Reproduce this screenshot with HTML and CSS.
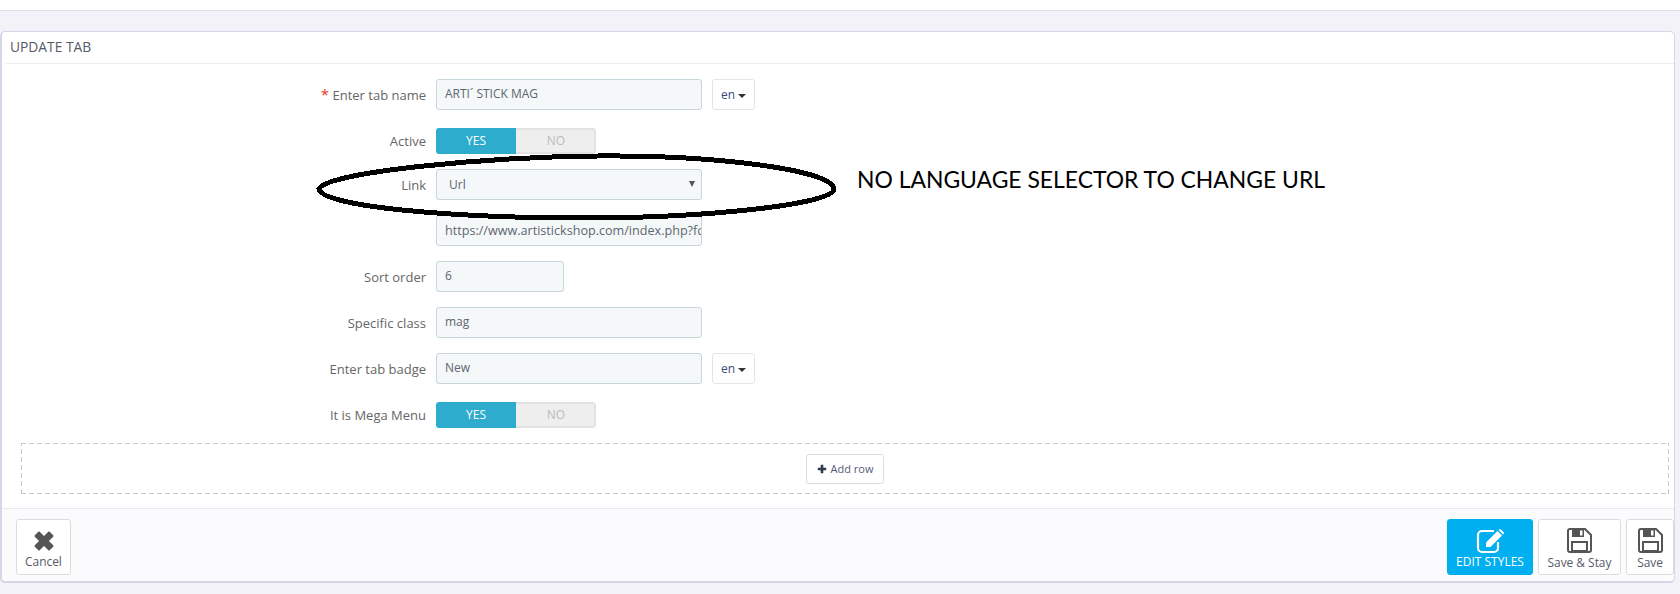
FILE: index.html
```html
<!DOCTYPE html>
<html lang="en">
<head>
<meta charset="utf-8">
<title>Update tab</title>
<link rel="stylesheet" href="styles.css">
</head>
<body>
<div class="topbar"></div>
<section class="panel">
  <h2 class="panel-title">UPDATE TAB</h2>
  <form class="form">
    <div class="row">
      <label class="label"><span class="req">*</span> Enter tab name</label>
      <div class="input wide">ARTI´ STICK MAG</div>
      <div class="lang">en <i class="caret"></i></div>
    </div>
    <div class="row row-toggle">
      <label class="label">Active</label>
      <div class="toggle"><span class="yes">YES</span><span class="no">NO</span></div>
    </div>
    <div class="row">
      <label class="label">Link</label>
      <div class="input wide select">Url<i class="select-arrow"></i></div>
    </div>
    <div class="row">
      <label class="label"></label>
      <div class="input wide clip">https://www.artistickshop.com/index.php?fc</div>
    </div>
    <div class="row">
      <label class="label">Sort order</label>
      <div class="input narrow">6</div>
    </div>
    <div class="row">
      <label class="label">Specific class</label>
      <div class="input wide">mag</div>
    </div>
    <div class="row">
      <label class="label">Enter tab badge</label>
      <div class="input wide">New</div>
      <div class="lang">en <i class="caret"></i></div>
    </div>
    <div class="row row-toggle">
      <label class="label">It is Mega Menu</label>
      <div class="toggle"><span class="yes">YES</span><span class="no">NO</span></div>
    </div>
    <div class="dropzone">
      <button type="button" class="add-row">
        <svg class="plus" viewBox="0 0 10 10"><path d="M3.700 0.800h2.600v2.900h2.900v2.600H6.300v2.900H3.700V6.300H0.800V3.700h2.900z"/></svg>
        Add row
      </button>
    </div>
  </form>
  <footer class="footer">
    <button type="button" class="btn cancel">
      <svg class="ico-x" viewBox="0 0 22 22"><path d="M6 2.500 11 7.500 16 2.500 19.500 6 14.500 11 19.500 16 16 19.500 11 14.500 6 19.500 2.500 16 7.500 11 2.500 6z"/></svg>
      <span>Cancel</span>
    </button>
    <div class="actions">
      <button type="button" class="btn primary">
        <svg class="ico-edit" viewBox="0 0 30 26">
          <path d="M22 14v6a4 4 0 0 1-4 4H6a4 4 0 0 1-4-4V7a4 4 0 0 1 4-4h12" fill="none" stroke="#fff" stroke-width="2.200"/>
          <path class="pencil" d="M10 14.500 21.500 3l4.500 4.500L14.500 19H10z"/>
          <path d="M23 1.600a1.500 1.500 0 0 1 2 0l2.500 2.500a1.500 1.500 0 0 1 0 2L27 6.500 22.600 2z" fill="#fff"/>
        </svg>
        <span>EDIT STYLES</span>
      </button>
      <button type="button" class="btn stay">
        <svg class="ico-save" viewBox="0 0 25 25"><path d="M1 3a2 2 0 0 1 2-2h15l6 6v15a2 2 0 0 1-2 2H3a2 2 0 0 1-2-2z" fill="none" stroke="#555" stroke-width="2"/><path d="M5 1h12v8H5z" fill="#555"/><path d="M13 2.500h2.500v5H13z" fill="#fff"/><path d="M5 14h15v9H5z" fill="none" stroke="#555" stroke-width="2"/></svg>
        <span>Save &amp; Stay</span>
      </button>
      <button type="button" class="btn save">
        <svg class="ico-save" viewBox="0 0 25 25"><path d="M1 3a2 2 0 0 1 2-2h15l6 6v15a2 2 0 0 1-2 2H3a2 2 0 0 1-2-2z" fill="none" stroke="#555" stroke-width="2"/><path d="M5 1h12v8H5z" fill="#555"/><path d="M13 2.500h2.500v5H13z" fill="#fff"/><path d="M5 14h15v9H5z" fill="none" stroke="#555" stroke-width="2"/></svg>
        <span>Save</span>
      </button>
    </div>
  </footer>
</section>
<svg class="ring" viewBox="0 0 540 76">
  <path d="M3 37C10 20 170 5 282 4C400 3 517 18 518 37C519 52 390 66 268 66C140 66 6 55 3 37Z" fill="none" stroke="#000" stroke-width="5"/>
</svg>
<p class="note">NO LANGUAGE SELECTOR TO CHANGE URL</p>
</body>
</html>
```
FILE: styles.css
```css
* { box-sizing: border-box; }
html, body { margin: 0; padding: 0; }
body {
  position: relative;
  height: 594px;
  overflow: hidden;
  background: #f2f2f8;
  font-family: "Open Sans", sans-serif;
  font-size: 13px;
  color: #555;
}
.topbar {
  height: 11px;
  background: #fff;
  border-bottom: 1px solid #dfdfe8;
}
.panel {
  margin: 20px 5px 0 0;
  height: 552px;
  background: #fff;
  border: 1px solid #d6d6e8;
  border-width: 1px 1px 2px 2px;
  border-radius: 5px;
  display: flex;
  flex-direction: column;
}
.panel-title {
  margin: 0 0 0 3px;
  height: 32px;
  padding: 5px 0 0 5px;
  font-size: 13.800px;
  line-height: 20px;
  font-weight: 400;
  color: #555a6a;
  border-bottom: 1px solid #eeeeee;
}
.form {
  flex: 1;
  padding: 15px 5px 0 19px;
}
.row {
  display: flex;
  align-items: center;
  margin-bottom: 15px;
}
.row-toggle { margin-top: 18px; }
.label {
  width: 405px;
  margin-right: 10px;
  text-align: right;
  color: #666;
  line-height: 20px;
}
.req { color: #e8372b; font-size: 15px; }
.input {
  height: 31px;
  line-height: 28px;
  padding: 0 8px;
  background: #f5f8f9;
  border: 1px solid #c7d6db;
  border-radius: 3px;
  color: #5c6670;
  font-size: 12px;
}
.wide { width: 266px; }
.narrow { width: 128px; }
.clip { overflow: hidden; white-space: nowrap; font-size: 12.600px; line-height: 29px; padding-right: 0; }
.select { position: relative; padding-left: 12px; font-size: 12px; line-height: 30px; }
.select-arrow {
  position: absolute;
  right: 6px;
  top: 11px;
  border-left: 3.500px solid transparent;
  border-right: 3.500px solid transparent;
  border-top: 6px solid #555;
}
.lang {
  margin-left: 10px;
  width: 43px;
  height: 31px;
  line-height: 29px;
  text-align: center;
  background: #fff;
  border: 1px solid #e2e6ea;
  border-radius: 3px;
  color: #3d4a78;
  font-size: 12px;
}
.caret {
  display: inline-block;
  vertical-align: middle;
  border-left: 4px solid transparent;
  border-right: 4px solid transparent;
  border-top: 4px solid #333;
}
.toggle {
  display: flex;
  width: 160px;
  height: 26px;
  border-radius: 3px;
  overflow: hidden;
  font-size: 12px;
  font-weight: 500;
  line-height: 25px;
  text-align: center;
}
.yes { width: 80px; background: #2eacce; color: #fff; }
.no {
  width: 80px;
  padding-left: 2px;
  background: #eee;
  color: #bbb;
  border: 2px solid #e2e2e2;
  border-left: 0;
  border-radius: 0 3px 3px 0;
  line-height: 22px;
}
.dropzone {
  width: 1648px;
  height: 51px;
  background-image:
    repeating-linear-gradient(90deg, #c8c8c8 0 5px, transparent 5px 8px),
    repeating-linear-gradient(90deg, #c8c8c8 0 5px, transparent 5px 8px),
    repeating-linear-gradient(0deg, #c8c8c8 0 5px, transparent 5px 8px),
    repeating-linear-gradient(0deg, #c8c8c8 0 5px, transparent 5px 8px);
  background-size: 100% 1px, 100% 1px, 1px 100%, 1px 100%;
  background-position: 0 0, 0 100%, 0 0, 100% 0;
  background-repeat: no-repeat;
  display: flex;
  align-items: center;
  justify-content: center;
}
.add-row {
  height: 30px;
  width: 78px;
  padding: 0;
  background: #fff;
  border: 1px solid #dcdcdc;
  border-radius: 3px;
  font-family: inherit;
  font-size: 11px;
  color: #555a78;
  display: flex;
  align-items: center;
  justify-content: center;
  gap: 4px;
}
.plus { width: 10px; height: 10px; fill: #2f3a4e; }
.footer {
  height: 73px;
  padding: 10px 0 0 14px;
  display: flex;
  justify-content: space-between;
  align-items: flex-start;
  background: #fbfbfe;
  border-top: 1px solid #e8e8ee;
  border-radius: 0 0 5px 5px;
}
.actions { display: flex; gap: 5px; }
.btn {
  height: 56px;
  padding: 0;
  background: #fff;
  border: 1px solid #dcdcdc;
  border-radius: 3px;
  font-family: inherit;
  font-size: 11.900px;
  line-height: 14px;
  color: #555a6a;
  display: flex;
  flex-direction: column;
  align-items: center;
  justify-content: flex-start;
}
.btn span { display: block; }
.cancel { width: 55px; }
.primary {
  width: 86px;
  background: #00aff0;
  border-color: #00aff0;
  color: #fff;
  font-weight: 400;
  font-size: 12px;
}
.stay { width: 83px; }
.save { width: 48px; }
.ico-x {
  width: 22px;
  height: 22px;
  margin: 10px 0 2px;
  fill: #555;
  stroke: #555;
  stroke-width: 2;
  stroke-linejoin: round;
}
.ico-edit { width: 30px; height: 26px; margin: 8px 0 1px 2px; }
.pencil { fill: #fff; stroke: #00aff0; stroke-width: 1.400px; paint-order: stroke; }
.ico-save { width: 25px; height: 25px; margin: 8px 0 2px; }
.ring {
  position: absolute;
  left: 316px;
  top: 152px;
  width: 540px;
  height: 76px;
  shape-rendering: crispEdges;
}
.note {
  position: absolute;
  left: 857px;
  top: 165px;
  margin: 0;
  font-family: Lato, sans-serif;
  font-size: 22.900px;
  line-height: 28px;
  color: #000;
  white-space: nowrap;
}
```
